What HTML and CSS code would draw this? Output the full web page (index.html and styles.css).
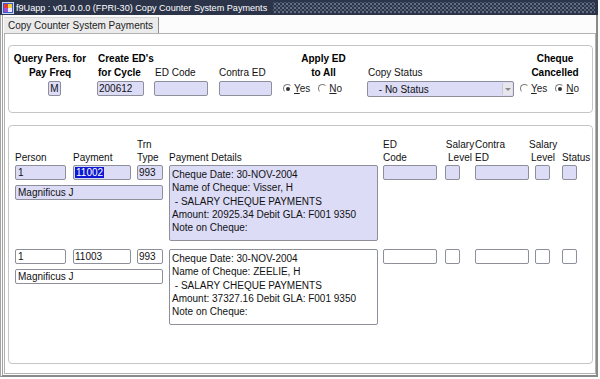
FILE: index.html
```html
<!DOCTYPE html>
<html lang="en">
<head>
    <meta charset="UTF-8">
    <title>Copy Counter System Payments</title>
    <link rel="stylesheet" href="styles.css">
</head>
<body>
    <div class="window">
        <div class="titlebar">
            <svg class="app-icon" width="12" height="12" viewBox="0 0 12 12">
                <rect x="0.5" y="0.5" width="11" height="11" fill="#3a5bc8" stroke="#c9d4f0"/>
                <rect x="2" y="2" width="4" height="4" fill="#e23a3a"/>
                <rect x="6" y="2" width="4" height="4" fill="#f2d23c"/>
                <rect x="2" y="6" width="4" height="4" fill="#9b4fd1"/>
                <rect x="6" y="6" width="4" height="4" fill="#e8e8f4"/>
            </svg>
            <span class="title">f9Uapp : v01.0.0.0 (FPRI-30) Copy Counter System Payments</span>
            <span class="dots"></span>
        </div>
        <div class="frame">
            <div class="tabs">
                <div class="tab">Copy Counter System Payments</div>
            </div>
            <div class="page">
                <!-- query block -->
                <div class="panel query current">
                    <div class="qcol col-freq">
                        <div class="qlabel bold center">Query Pers. for<br>Pay Freq</div>
                        <div class="field w-freq">M</div>
                    </div>
                    <div class="qcol col-cycle">
                        <div class="qlabel bold">Create ED's<br>for Cycle</div>
                        <div class="field w-cycle">200612</div>
                    </div>
                    <div class="qcol col-code">
                        <div class="qlabel">ED Code</div>
                        <div class="field w-code"></div>
                    </div>
                    <div class="qcol col-contra">
                        <div class="qlabel">Contra ED</div>
                        <div class="field w-contra"></div>
                    </div>
                    <div class="qcol col-apply">
                        <div class="qlabel bold center">Apply ED<br>to All</div>
                        <div class="radios">
                            <span class="radio on"></span><span class="rtext"><u>Y</u>es</span>
                            <span class="radio"></span><span class="rtext"><u>N</u>o</span>
                        </div>
                    </div>
                    <div class="qcol col-status">
                        <div class="qlabel">Copy Status</div>
                        <div class="field select">
                            <span class="select-text"> - No Status</span>
                            <span class="select-btn"></span>
                        </div>
                    </div>
                    <div class="qcol col-cancel">
                        <div class="qlabel bold center">Cheque<br>Cancelled</div>
                        <div class="radios">
                            <span class="radio"></span><span class="rtext"><u>Y</u>es</span>
                            <span class="radio on"></span><span class="rtext"><u>N</u>o</span>
                        </div>
                    </div>
                </div>

                <!-- payment records -->
                <div class="panel records">
                    <div class="rgrid head">
                        <div>Person</div>
                        <div>Payment</div>
                        <div>Trn<br>Type</div>
                        <div>Payment Details</div>
                        <div>ED<br>Code</div>
                        <div class="center">Salary<br>Level</div>
                        <div>Contra<br>ED</div>
                        <div class="center sal2">Salary<br>Level</div>
                        <div>Status</div>
                    </div>

                    <div class="rgrid rec current">
                        <div class="field w-person">1</div>
                        <div class="field w-payment"><span class="sel">11002</span></div>
                        <div class="field w-trn">993</div>
                        <div class="field details">Cheque Date: 30-NOV-2004
Name of Cheque: Visser, H
 - SALARY CHEQUE PAYMENTS
Amount: 20925.34 Debit GLA: F001 9350
Note on Cheque:</div>
                        <div class="field w-edcode"></div>
                        <div class="field w-small"></div>
                        <div class="field w-edcode"></div>
                        <div class="field w-small"></div>
                        <div class="field w-small"></div>
                        <div class="field w-name">Magnificus J</div>
                    </div>

                    <div class="rgrid rec">
                        <div class="field w-person">1</div>
                        <div class="field w-payment">11003</div>
                        <div class="field w-trn">993</div>
                        <div class="field details">Cheque Date: 30-NOV-2004
Name of Cheque: ZEELIE, H
 - SALARY CHEQUE PAYMENTS
Amount: 37327.16 Debit GLA: F001 9350
Note on Cheque:</div>
                        <div class="field w-edcode"></div>
                        <div class="field w-small"></div>
                        <div class="field w-edcode"></div>
                        <div class="field w-small"></div>
                        <div class="field w-small"></div>
                        <div class="field w-name">Magnificus J</div>
                    </div>
                </div>
            </div>
        </div>
    </div>
</body>
</html>
```

FILE: styles.css
```css
body {
    margin: 0;
    background: #fff;
    font-family: "Liberation Sans", Arial, sans-serif;
    font-size: 10px;
    color: #111;
}

.window {
    width: 598px;
    height: 377px;
    display: flex;
    flex-direction: column;
}

.titlebar {
    height: 15px;
    background: #2b3449;
    color: #fff;
    display: flex;
    align-items: center;
    font-size: 9.1px;
}

.app-icon {
    margin: 0 2px 0 2px;
    flex: none;
}

.title {
    white-space: nowrap;
}

.dots {
    flex: 1;
    align-self: stretch;
    margin: 2px 3px 2px 6px;
    background-image:
        radial-gradient(circle, #7a869c 0.6px, transparent 1px),
        radial-gradient(circle, #5d6a82 0.6px, transparent 1px);
    background-size: 4px 4px, 4px 4px;
    background-position: 0 0, 2px 2px;
}

.frame {
    flex: 1;
    display: flex;
    flex-direction: column;
    border-left: 3px double #a4a4a4;
    border-right: 2px solid #8a8a8a;
    border-bottom: 2px solid #8a8a8a;
    padding: 2px 0 1px 1px;
    background: #fcfcfc;
}

.tabs {
    height: 16px;
    display: flex;
}

.tab {
    padding: 0 5px 0 4px;
    line-height: 15px;
    background: #ebebeb;
    border-top: 1px solid #d4d4d4;
    border-right: 1px solid #8c8c8c;
    color: #222;
    white-space: nowrap;
}

.page {
    flex: 1;
    display: flex;
    flex-direction: column;
    border: 1px solid #b2b2b2;
    background: #fff;
    padding: 11px 2px 9px 3px;
}

.panel {
    border: 1px solid #c6c6c6;
    border-radius: 4px;
}

/* query block */

.query {
    height: 68px;
    box-sizing: border-box;
    padding: 6px 0 0 4px;
    display: flex;
    margin-bottom: 12px;
}

.qcol {
    display: flex;
    flex-direction: column;
}

.qlabel {
    height: 28px;
    line-height: 14px;
    display: flex;
    flex-direction: column;
    justify-content: flex-end;
    margin-bottom: 1px;
    white-space: nowrap;
}

.qlabel.bold {
    display: block;
}

.bold {
    font-weight: bold;
    color: #000;
}

.center {
    text-align: center;
}

.col-freq { width: 84px; }
.col-freq .qlabel { width: 74px; }
.col-freq .field { margin-left: 35px; }
.col-cycle { width: 57px; }
.col-cycle .qlabel { padding-left: 1px; }
.col-code { width: 65px; }
.col-code .qlabel { padding-left: 1px; }
.col-contra { width: 61px; }
.col-apply { width: 87px; }
.col-status { width: 153px; }
.col-status .qlabel { padding-left: 1px; }
.col-cancel { width: 70px; }

.field {
    height: 15px;
    box-sizing: border-box;
    border: 1px solid #8d8f9b;
    border-radius: 2px;
    background: #fff;
    padding: 0 2px;
    line-height: 13px;
    white-space: nowrap;
    overflow: hidden;
}

.current .field {
    background: #dcdcf7;
}

.w-freq { width: 13px; text-align: center; padding: 0; }
.w-cycle { width: 47px; padding-left: 1px; }
.w-code { width: 54px; }
.w-contra { width: 53px; }

.select {
    width: 147px;
    height: 16px;
    display: flex;
    align-items: center;
    padding: 0 1px 0 8px;
}

.select-text {
    flex: 1;
    white-space: pre;
}

.select-btn {
    width: 9px;
    height: 12px;
    background: #e6e6ec;
    border-left: 1px solid #c8c8d4;
    position: relative;
}

.select-btn::after {
    content: "";
    position: absolute;
    left: 2px;
    top: 5px;
    border-left: 3px solid transparent;
    border-right: 3px solid transparent;
    border-top: 3px solid #8a8a8a;
}

.radios {
    height: 15px;
    display: flex;
    align-items: center;
}

.col-apply .radios { padding-left: 3px; }

.radio {
    width: 9px;
    height: 9px;
    box-sizing: border-box;
    border-radius: 50%;
    border: 1px solid transparent;
    border-top-color: #7c7c7c;
    border-left-color: #7c7c7c;
    margin-right: 2px;
    position: relative;
}

.radio.on::after {
    content: "";
    position: absolute;
    left: 1.5px;
    top: 1.5px;
    width: 4px;
    height: 4px;
    border-radius: 50%;
    background: #333;
}

.rtext {
    margin-right: 8px;
    color: #222;
}

/* records block */

.records {
    flex: 1;
    padding: 12px 0 0 6px;
}

.rgrid {
    display: grid;
    grid-template-columns: 58px 64px 32px 214px 62px 30px 60px 27px 30px;
}

.head {
    line-height: 13px;
    align-items: end;
    margin-bottom: 1px;
    white-space: nowrap;
}

.head .center {
    width: 30px;
}

.head .sal2 {
    width: 28px;
    margin-left: -6px;
}

.rec {
    grid-template-rows: 15px auto;
    row-gap: 5px;
    align-items: start;
    margin-bottom: 8px;
}

.w-person { width: 51px; }
.w-payment { width: 58px; padding-left: 1px; }
.w-trn { width: 26px; padding-left: 1px; }
.w-edcode { width: 54px; }
.w-small { width: 15px; }

.w-name {
    grid-column: 1 / 4;
    grid-row: 2;
    width: 148px;
}

.details {
    grid-row: 1 / 3;
    grid-column: 4;
    width: 209px;
    height: 76px;
    padding: 2px 2px 0 2px;
    line-height: 13.3px;
    white-space: pre;
}

.sel {
    background: #0c18d2;
    color: #fff;
    padding: 0 1px;
}
```
